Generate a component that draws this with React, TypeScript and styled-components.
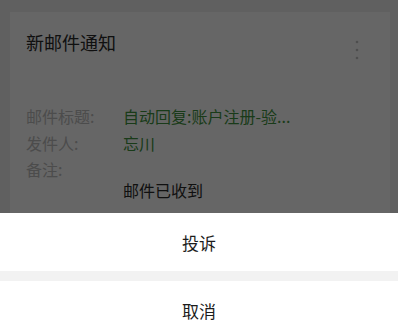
import React from "react"
import styled, { createGlobalStyle } from "styled-components"

const GlobalStyle = createGlobalStyle`
  html, body {
    margin: 0;
    padding: 0;
    background: #f0f0f0;
    font-family: "Noto Sans CJK SC", "Noto Sans", sans-serif;
    overflow: hidden;
  }
`

const Page = styled.div`
  height: 335px;
  padding: 12px 8px 0 10px;
  box-sizing: border-box;
`

const Card = styled.div`
  background: #fff;
  height: 240px;
  padding: 17px 16px 0 16px;
  box-sizing: border-box;
`

const Header = styled.div`
  display: flex;
  justify-content: space-between;
  align-items: flex-start;
`

const Title = styled.div`
  font-size: 18px;
  line-height: 26px;
  color: #2a2a2a;
`

const MoreButton = styled.div`
  width: 24px;
  margin-top: 11px;
  margin-right: 5px;
  display: flex;
  justify-content: center;
`

const Fields = styled.div`
  margin-top: 43px;
`

const Row = styled.div`
  display: flex;
  font-size: 16px;
  line-height: 26.5px;
`

const Label = styled.div`
  width: 97px;
  flex-shrink: 0;
  color: #bdbdbd;
`

const Value = styled.div<{ $accent?: boolean }>`
  color: ${(p) => (p.$accent ? "#3f9440" : "#2a2a2a")};
  white-space: nowrap;
`

const Remark = styled.div`
  padding-left: 97px;
  margin-top: -6px;
  font-size: 16px;
  line-height: 26px;
  color: #2a2a2a;
`

const Mask = styled.div`
  position: fixed;
  inset: 0;
  background: rgba(0, 0, 0, 0.6);
`

const Sheet = styled.div`
  position: fixed;
  left: 0;
  right: 0;
  top: 213px;
  background: #f2f2f2;
  display: flex;
  flex-direction: column;
  gap: 10px;
`

const SheetButton = styled.div`
  height: 58px;
  background: #fff;
  display: flex;
  align-items: center;
  justify-content: center;
  font-size: 17px;
  color: #1c1c1c;
`

const Dots = () => (
  <svg width="4" height="20" viewBox="0 0 4 20">
    <circle cx="2" cy="2" r="1.3" fill="#c4c4c4" />
    <circle cx="2" cy="10" r="1.3" fill="#c4c4c4" />
    <circle cx="2" cy="18" r="1.3" fill="#c4c4c4" />
  </svg>
)

export default function App() {
  return (
    <>
      <GlobalStyle />
      <Page>
        <Card>
          <Header>
            <Title>新邮件通知</Title>
            <MoreButton>
              <Dots />
            </MoreButton>
          </Header>
          <Fields>
            <Row>
              <Label>邮件标题:</Label>
              <Value $accent>自动回复:账户注册-验...</Value>
            </Row>
            <Row>
              <Label>发件人:</Label>
              <Value $accent>忘川</Value>
            </Row>
            <Row>
              <Label>备注:</Label>
            </Row>
            <Remark>邮件已收到</Remark>
          </Fields>
        </Card>
      </Page>
      <Mask />
      <Sheet>
        <SheetButton>投诉</SheetButton>
        <SheetButton>取消</SheetButton>
      </Sheet>
    </>
  )
}
